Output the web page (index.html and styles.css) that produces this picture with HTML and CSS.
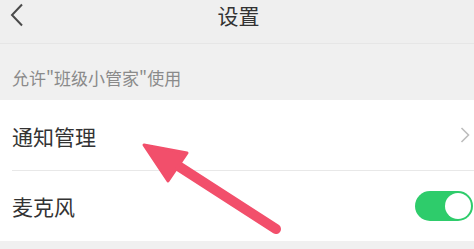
FILE: index.html
```html
<!DOCTYPE html>
<html lang="zh">
<head>
<meta charset="utf-8">
<link rel="stylesheet" href="styles.css">
</head>
<body>
<div class="page">
  <header class="topbar">
    <div class="back">
      <svg width="14" height="24" viewBox="0 0 14 24"><path d="M12 1.5 L2 12 L12 22.5" fill="none" stroke="#4a4a4a" stroke-width="2"/></svg>
    </div>
    <div class="title">设置</div>
    <div></div>
  </header>
  <div class="section-label">允许"班级小管家"使用</div>
  <div class="card">
    <div class="row">
      <span class="row-text">通知管理</span>
      <svg class="chev" width="10" height="16" viewBox="0 0 10 16"><path d="M1.5 1 L8.5 8 L1.5 15" fill="none" stroke="#bdbdbd" stroke-width="1.6"/></svg>
    </div>
    <div class="divider"></div>
    <div class="row">
      <span class="row-text">麦克风</span>
      <div class="toggle"><div class="knob"></div></div>
    </div>
  </div>
  <svg class="arrow" width="474" height="249" viewBox="0 0 474 249">
    <line x1="276" y1="229" x2="172" y2="162" stroke="#f24f6b" stroke-width="10" stroke-linecap="round"/>
    <polygon points="144,145 187,153 168,181" fill="#f24f6b" stroke="#f24f6b" stroke-width="3" stroke-linejoin="round"/>
  </svg>
</div>
</body>
</html>
```
FILE: styles.css
```css
html, body {
  margin: 0;
  padding: 0;
  background: #f0f0f0;
}
.page {
  position: relative;
  width: 474px;
  height: 249px;
  overflow: hidden;
  font-family: "Noto Sans CJK SC", "Noto Sans", sans-serif;
  background: #f0f0f0;
}
.topbar {
  height: 43px;
  display: grid;
  grid-template-columns: 1fr auto 1fr;
  align-items: center;
  border-bottom: 1px solid #e6e6e6;
  background: #efefef;
}
.back {
  padding-left: 10px;
  display: flex;
  align-items: center;
  margin-top: -14px;
}
.title {
  font-size: 21px;
  color: #333;
  margin-top: -13px;
  padding-left: 3px;
}
.section-label {
  box-sizing: border-box;
  height: 56px;
  padding: 10px 12px 0;
  display: flex;
  align-items: center;
  font-size: 17px;
  color: #8a8a8a;
}
.card {
  background: #fff;
}
.row {
  height: 70px;
  display: flex;
  align-items: center;
  justify-content: space-between;
  padding: 0 1px 0 12px;
}
.row:first-child {
  padding-right: 4px;
}
.row-text {
  font-size: 21px;
  color: #333;
}
.row:first-child .row-text {
  margin-top: 2px;
}
.divider {
  height: 1px;
  margin-left: 12px;
  background: #e8e8e8;
}
.toggle {
  width: 58px;
  height: 30px;
  border-radius: 15px;
  background: #2ecc6b;
  display: flex;
  justify-content: flex-end;
  align-items: center;
  box-sizing: border-box;
  padding: 2px;
}
.knob {
  width: 26px;
  height: 26px;
  border-radius: 50%;
  background: #fff;
}
.arrow {
  position: absolute;
  top: 0;
  left: 0;
  pointer-events: none;
}
```
